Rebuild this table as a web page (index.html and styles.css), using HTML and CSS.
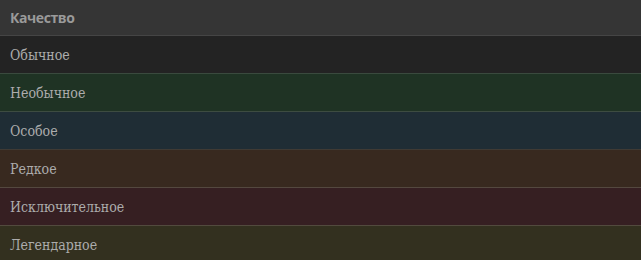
FILE: index.html
```html
<!DOCTYPE html>
<html lang="ru">
<head>
<meta charset="utf-8">
<link rel="stylesheet" href="styles.css">
</head>
<body>
<div class="table">
  <div class="head">Качество</div>
  <div class="row common">Обычное</div>
  <div class="row uncommon">Необычное</div>
  <div class="row special">Особое</div>
  <div class="row rare">Редкое</div>
  <div class="row exceptional">Исключительное</div>
  <div class="row legendary">Легендарное</div>
</div>
</body>
</html>
```
FILE: styles.css
```css
html, body {
  margin: 0;
  padding: 0;
  background: #222222;
}
.table {
  display: flex;
  flex-direction: column;
  width: 641px;
}
.head {
  height: 36px;
  box-sizing: border-box;
  padding: 0 10px 1px;
  display: flex;
  align-items: center;
  background: #353535;
  color: #9a9a9a;
  font-family: "Open Sans", sans-serif;
  font-weight: 700;
  font-size: 14px;
  letter-spacing: -0.4px;
  border-bottom: 1px solid #454545;
}
.row {
  height: 38px;
  box-sizing: border-box;
  padding: 0 10px;
  display: flex;
  align-items: center;
  color: #acacac;
  font-family: "DejaVu Serif Condensed", "DejaVu Serif", serif;
  font-stretch: condensed;
  font-size: 14px;
  border-bottom: 1px solid #3d3d3d;
}
.common { background: #232323; border-color: #3a4a3e; }
.uncommon { background: #1f3324; border-color: #3d4c41; }
.special { background: #1f2d35; border-color: #3f3a34; }
.rare { background: #38291f; border-color: #54483f; }
.exceptional { background: #361f22; border-color: #524a3e; }
.legendary { background: #33301f; border-bottom: none; }
```
